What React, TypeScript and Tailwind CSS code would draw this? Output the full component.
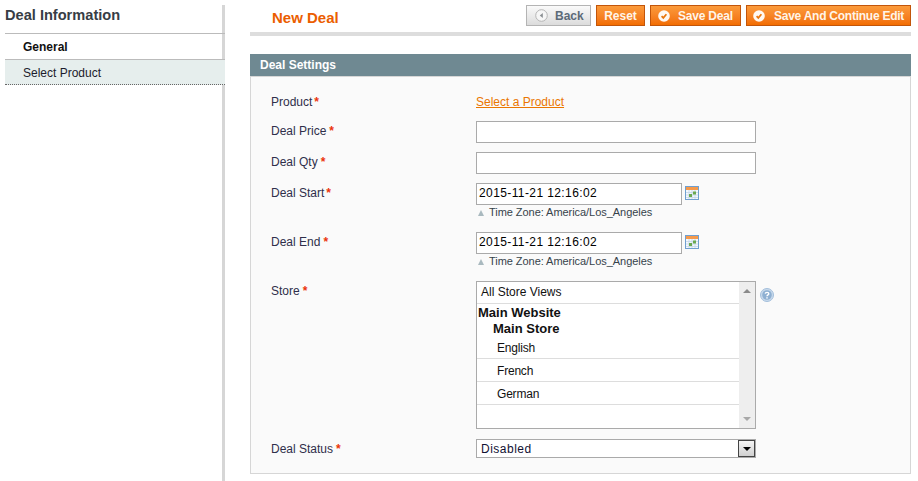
const font = { fontFamily: '"Liberation Sans", Arial, sans-serif' };

function Req({ gap = "ml-[3px]" }: { gap?: string }) {
  return <span className={`${gap} font-bold text-[#eb340a]`}>*</span>;
}

function CheckIcon() {
  return (
    <svg width="12" height="12" viewBox="0 0 12 12" className="shrink-0">
      <circle cx="6" cy="6" r="5.8" fill="#fff" fillOpacity="0.95" />
      <path d="M3.6 6.2 L5.3 7.9 L8.4 4.2" fill="none" stroke="#e8760f" strokeWidth="1.7" />
    </svg>
  );
}

function BackIcon() {
  return (
    <svg width="13" height="13" viewBox="0 0 13 13" className="shrink-0">
      <circle cx="6.5" cy="6.5" r="5.8" fill="#f6f6f6" stroke="#b5b5b5" />
      <path d="M7.8 4 L4.8 6.5 L7.8 9 Z" fill="#8a8f92" />
    </svg>
  );
}

function CalendarIcon() {
  return (
    <svg width="14" height="14" viewBox="0 0 14 14" className="ml-[3px] mt-[3px] shrink-0">
      <rect x="0.5" y="0.5" width="13" height="13" fill="#f4f8fc" stroke="#6f9fd0" />
      <rect x="1" y="1" width="12" height="3" fill="#f59a4c" />
      <path d="M1 6.5H13M1 9H13M1 11.5H13M4 4V13M7 4V13M10 4V13" stroke="#c4d4e6" strokeWidth="0.8" />
      <rect x="4" y="8" width="3" height="3" fill="#6aa84f" />
      <rect x="8" y="5.5" width="3" height="3" fill="#6aa84f" />
    </svg>
  );
}

function HelpIcon() {
  return (
    <svg width="14" height="14" viewBox="0 0 14 14" className="ml-[4px] mt-[7px] shrink-0">
      <circle cx="7" cy="7" r="6.5" fill="#c9daec" stroke="#a3bedb" />
      <circle cx="7" cy="7" r="4.8" fill="#8fb0d2" />
      <path d="M5.2 5.6 C5.4 3.9 8.8 3.9 8.8 5.7 C8.8 7 7 6.8 7 8.3" fill="none" stroke="#fff" strokeWidth="1.4" />
      <rect x="6.3" y="9.2" width="1.4" height="1.4" fill="#fff" />
    </svg>
  );
}

function OrangeButton({ label, icon, className }: { label: string; icon?: boolean; className: string }) {
  return (
    <button
      className={`flex h-[21px] items-center whitespace-nowrap border border-[#c2550a] bg-gradient-to-b from-[#fb9a3a] to-[#f26d00] text-[12px] font-bold text-[#fff5e8] ${className}`}
    >
      {icon && <CheckIcon />}
      {label}
    </button>
  );
}

function TimeZone() {
  return (
    <div className="flex h-[15px] items-center pl-[2px] text-[11px] tracking-[-0.05px] text-[#36434b]">
      <span className="mr-[5px] h-0 w-0 border-x-[3.5px] border-b-[6px] border-x-transparent border-b-[#a9b9bf]" />
      Time Zone: America/Los_Angeles
    </div>
  );
}

function Label({ children }: { children: React.ReactNode }) {
  return <div className="w-[205px] shrink-0 pt-[2px] leading-[16px] text-[#2f2f4a]">{children}</div>;
}

const inputClass =
  "h-[22px] border border-[#aaaaaa] bg-white px-[2px] text-[12px] leading-[18px] text-black";

function DateField() {
  return (
    <div>
      <div className="flex">
        <div className={`${inputClass} w-[206px] tracking-[0.4px]`}>2015-11-21 12:16:02</div>
        <CalendarIcon />
      </div>
      <TimeZone />
    </div>
  );
}

function StoreOption({ label }: { label: string }) {
  return <div className="h-[23px] border-b border-[#dddddd] pl-[20px] leading-[24px] tracking-[-0.2px]">{label}</div>;
}

export default function App() {
  return (
    <div style={font} className="flex h-[481px] w-[918px] overflow-hidden bg-white text-[12px]">
      <aside className="ml-[5px] mt-[5px] w-[220px] shrink-0 border-r-[3px] border-[#d6d6d6]">
        <div className="h-[29px] w-[220px] border-b border-[#bbbbbb] text-[14.6px] font-bold leading-[20px] text-[#373d45]">
          Deal Information
        </div>
        <div className="flex h-[25px] items-center pl-[18px] font-bold text-[#111111]">General</div>
        <div className="flex h-[26px] w-[220px] items-center border-t border-b border-t-[#bbbbbb] border-b-[#666666] [border-bottom-style:dotted] bg-[#e6eeed] pl-[18px] pt-[2px] text-[#1c1c2c]">
          Select Product
        </div>
      </aside>

      <main className="ml-[25px] w-[661px] shrink-0">
        <div className="h-[36px] border-b-4 border-[#dddddd] pt-[5px]">
          <div className="flex items-start justify-between">
            <h1 className="ml-[22px] mt-[4px] text-[15px] font-bold leading-[18px] text-[#eb5e00]">New Deal</h1>
            <div className="flex gap-[5px]">
              <button className="flex h-[21px] w-[65px] items-center justify-start gap-[7px] border border-[#b4b4b4] bg-gradient-to-b from-[#fafafa] to-[#dcdcdc] pl-[8px] text-[12px] font-bold text-[#5c6a78]">
                <BackIcon />
                Back
              </button>
              <OrangeButton label="Reset" className="w-[49px] justify-center" />
              <OrangeButton label="Save Deal" icon className="w-[91px] gap-[8px] pl-[7px] tracking-[-0.2px]" />
              <OrangeButton label="Save And Continue Edit" icon className="w-[165px] gap-[9px] pl-[6px] tracking-[-0.25px]" />
            </div>
          </div>
        </div>

        <section className="mt-[18px]">
          <div className="h-[22px] bg-[#6f8992] pl-[10px] font-bold leading-[22px] text-white">Deal Settings</div>
          <div className="h-[398px] border border-[#d6d6d6] bg-[#fafafa] pl-[20px] pt-[15px]">
            <div className="flex h-[29px]">
              <Label>
                Product
                <Req gap="ml-[2px]" />
              </Label>
              <a className="pt-[2px] leading-[16px] text-[#ea7601] underline">Select a Product</a>
            </div>

            <div className="flex h-[31px]">
              <Label>
                Deal Price
                <Req />
              </Label>
              <div className={`${inputClass} w-[280px]`} />
            </div>

            <div className="flex h-[31px]">
              <Label>
                Deal Qty
                <Req />
              </Label>
              <div className={`${inputClass} w-[280px]`} />
            </div>

            <div className="flex h-[49px]">
              <Label>
                Deal Start
                <Req gap="ml-[2px]" />
              </Label>
              <DateField />
            </div>

            <div className="flex h-[49px]">
              <Label>
                Deal End
                <Req />
              </Label>
              <DateField />
            </div>

            <div className="flex h-[158px]">
              <Label>
                Store
                <Req />
              </Label>
              <div className="flex h-[148px] w-[280px] border border-[#aaaaaa] bg-white leading-[18px] text-[#111111]">
                <div className="flex-1 overflow-hidden">
                  <div className="h-[22px] border-b border-[#dddddd] pl-[4px] leading-[20px]">All Store Views</div>
                  <div className="h-[16px] pl-[1px] text-[13px] font-bold leading-[17px]">Main Website</div>
                  <div className="h-[16px] pl-[16px] text-[13px] font-bold leading-[17px]">Main Store</div>
                  <StoreOption label="English" />
                  <StoreOption label="French" />
                  <StoreOption label="German" />
                </div>
                <div className="flex w-[16px] flex-col items-center justify-between bg-[#eeeeee] py-[7px]">
                  <span className="h-0 w-0 border-x-[4px] border-b-[4px] border-x-transparent border-b-[#8a8a8a]" />
                  <span className="h-0 w-0 border-x-[4px] border-t-[4px] border-x-transparent border-t-[#a8a8a8]" />
                </div>
              </div>
              <HelpIcon />
            </div>

            <div className="flex">
              <Label>
                Deal Status
                <Req />
              </Label>
              <div className="flex h-[19px] w-[280px] items-center justify-between border border-[#aaaaaa] bg-white pl-[4px] tracking-[0.5px] text-[#111133]">
                Disabled
                <span className="flex h-[17px] w-[17px] items-center justify-center border border-[#444444] bg-gradient-to-b from-[#f4f4f4] to-[#d0d0d0]">
                  <span className="h-0 w-0 border-x-[4px] border-t-[4px] border-x-transparent border-t-black" />
                </span>
              </div>
            </div>
          </div>
        </section>
      </main>
    </div>
  );
}
